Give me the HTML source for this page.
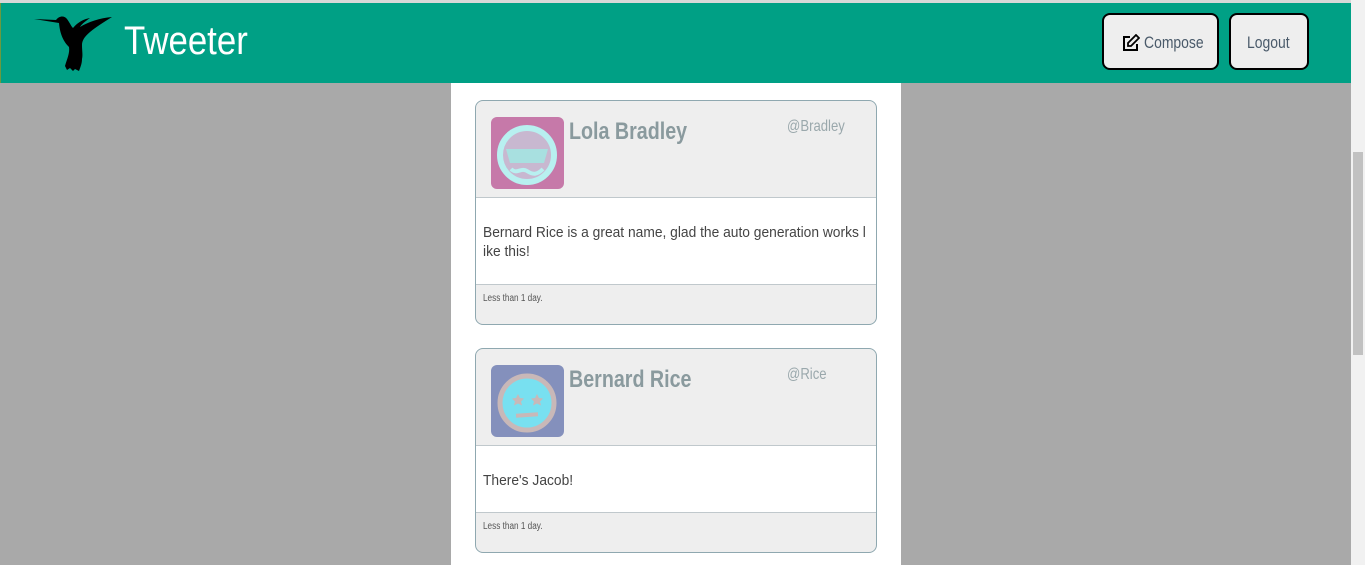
<!DOCTYPE html>
<html><head><style>
*{box-sizing:border-box;margin:0;padding:0}
body{width:1365px;height:565px;overflow:hidden;background:#a9a9a9;font-family:"Liberation Sans",sans-serif;position:relative}
.n{display:inline-block;transform:scaleX(.82);transform-origin:left top;white-space:nowrap}
.top{position:absolute;left:0;top:0;width:1351px;height:3px;background:#d8d8d8}
.hdr{position:absolute;left:0;top:3px;width:1351px;height:80px;background:#00a085;border-left:1px solid #6a9a40}
.title{position:absolute;left:123px;top:16px;color:#fff;font-size:40px;font-weight:300}
.btn{position:absolute;top:13px;height:57px;border:2px solid #000;border-radius:8px;background:#eee;color:#4a5a6a;font-size:17px}
.btn .n{position:absolute;top:18px}
.col{position:absolute;left:451px;top:83px;width:450px;height:482px;background:#fff}
.card{position:absolute;left:475px;width:402px;border:1px solid #8fa8b0;border-radius:8px;overflow:hidden;background:#eee}
.ch{height:97px;border-bottom:1px solid #c0c8cc;position:relative}
.av{position:absolute;left:15px;top:16px;width:73px;height:72px;border-radius:6px;overflow:hidden}
.nm{position:absolute;left:93px;top:17px;font-size:24px;font-weight:bold;color:#8a9a9e}
.hd{position:absolute;left:311px;top:17px;font-size:16px;color:#9aa8ac}
.cb{background:#fff;border-bottom:1px solid #c0c8cc;padding:25px 7px 0;font-size:15px;color:#444;line-height:19px}
.cb .w{width:460px;transform:scaleX(.92);transform-origin:left top;white-space:nowrap}
.cf{height:39px;padding:8px 7px;font-size:10px;color:#555}
.sb{position:absolute;left:1351px;top:0;width:14px;height:565px;background:#f1f1f1}
.th{position:absolute;left:1353px;top:152px;width:10px;height:203px;background:#c1c1c1}
</style></head><body>
<div class="top"></div>
<div class="hdr">
<svg style="position:absolute;left:33px;top:10px" width="80" height="58" viewBox="0 0 80 58"><path d="M0 6 L22 7 C25 3 30 2 33 6 C36 10 37 13 39 15 C44 9 50 6 56 5 C50 9 47 12 46 14 C54 9 66 5 78 4 C70 9 62 14 56 19 C50 24 48 28 48 32 C48 38 49 42 48 46 C48 51 46 55 45 58 L41 56 L39 58 L36 55 L33 57 L31 53 C33 46 36 40 35 34 C30 29 26 22 25 10 Z" fill="#000"/></svg>
<div class="title"><span class="n" style="transform:scaleX(.87)">Tweeter</span></div>
</div>
<div class="btn" style="left:1102px;width:117px"><svg style="position:absolute;left:18px;top:19px" width="18" height="18" viewBox="0 0 18 18"><path d="M8 3H2v13h13v-6" fill="none" stroke="#000" stroke-width="2"/><path d="M14 1l3 3-8 8H6V9z" fill="none" stroke="#000" stroke-width="1.8"/></svg><span class="n" style="left:40px">Compose</span></div>
<div class="btn" style="left:1229px;width:80px"><span class="n" style="left:16px">Logout</span></div>
<div class="col"></div>
<div class="card" style="top:100px">
<div class="ch"><div class="av" style="background:#c679a9"><svg width="73" height="72"><path d="M18 14l6 8M58 22l-6 4" stroke="#b8f0f0" stroke-width="5"/><circle cx="36" cy="38" r="27" fill="#c8b8d0" stroke="#b8f0f0" stroke-width="6"/><path d="M15 32h42l-4 14h-34z" fill="#a8e0e0"/><path d="M20 52c6 6 10-2 16 2s10 4 16-2" fill="none" stroke="#b8f0f0" stroke-width="4"/></svg></div><div class="nm"><span class="n">Lola Bradley</span></div><div class="hd"><span class="n">@Bradley</span></div></div>
<div class="cb" style="height:87px"><div class="w">Bernard Rice is a great name, glad the auto generation works l<br>ike this!</div></div>
<div class="cf"><span class="n">Less than 1 day.</span></div>
</div>
<div class="card" style="top:348px">
<div class="ch"><div class="av" style="background:#8490bc"><svg width="73" height="72"><circle cx="36" cy="38" r="27" fill="#78e0f0" stroke="#c8b8b8" stroke-width="5"/><path d="M27 29l2 4 4 .5-3 3 1 4-4-2-4 2 1-4-3-3 4-.5z" fill="#c8b8b8"/><path d="M46 29l2 4 4 .5-3 3 1 4-4-2-4 2 1-4-3-3 4-.5z" fill="#c8b8b8"/><rect x="25" y="48" width="22" height="4" fill="#c8b8b8" transform="rotate(-4 36 50)"/></svg></div><div class="nm"><span class="n">Bernard Rice</span></div><div class="hd"><span class="n">@Rice</span></div></div>
<div class="cb" style="height:67px"><div class="w">There's Jacob!</div></div>
<div class="cf"><span class="n">Less than 1 day.</span></div>
</div>
<div class="sb"></div><div class="th"></div>
</body></html>
